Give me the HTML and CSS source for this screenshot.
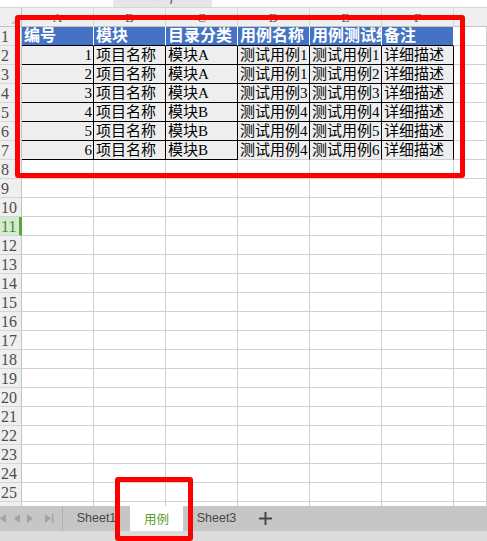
FILE: index.html
```html
<!DOCTYPE html>
<html lang="zh">
<head>
<meta charset="utf-8">
<title>用例</title>
<link rel="stylesheet" href="styles.css">
</head>
<body>
<div class="app">
  <div class="formula">
    <div class="namebox"><span class="cut">A11</span></div>
    <div class="fxbox"><span class="cut fx">✓ <i>fx</i></span></div>
    <div class="fbar"></div>
  </div>
  <div class="sheet">
    <div class="row colhead">
      <span class="corner"><span class="tri"></span></span>
      <span class="ch">A</span><span class="ch">B</span><span class="ch">C</span><span class="ch">D</span><span class="ch">E</span><span class="ch">F</span><span class="ch last"></span>
    </div>
    <div class="row">
      <span class="rh">1</span>
      <span class="c hd">编号</span><span class="c hd">模块</span><span class="c hd">目录分类</span><span class="c hd">用例名称</span><span class="c hd">用例测试结果</span><span class="c hd">备注</span><span class="c"></span>
    </div>
    <div class="row">
      <span class="rh">2</span>
      <span class="c d num">1</span><span class="c d">项目名称</span><span class="c d">模块A</span><span class="c d">测试用例1</span><span class="c d">测试用例1</span><span class="c d">详细描述</span><span class="c"></span>
    </div>
    <div class="row">
      <span class="rh">3</span>
      <span class="c d num">2</span><span class="c d">项目名称</span><span class="c d">模块A</span><span class="c d">测试用例1</span><span class="c d">测试用例2</span><span class="c d">详细描述</span><span class="c"></span>
    </div>
    <div class="row">
      <span class="rh">4</span>
      <span class="c d num">3</span><span class="c d">项目名称</span><span class="c d">模块A</span><span class="c d">测试用例3</span><span class="c d">测试用例3</span><span class="c d">详细描述</span><span class="c"></span>
    </div>
    <div class="row">
      <span class="rh">5</span>
      <span class="c d num">4</span><span class="c d">项目名称</span><span class="c d">模块B</span><span class="c d">测试用例4</span><span class="c d">测试用例4</span><span class="c d">详细描述</span><span class="c"></span>
    </div>
    <div class="row">
      <span class="rh">6</span>
      <span class="c d num">5</span><span class="c d">项目名称</span><span class="c d">模块B</span><span class="c d">测试用例4</span><span class="c d">测试用例5</span><span class="c d">详细描述</span><span class="c"></span>
    </div>
    <div class="row">
      <span class="rh">7</span>
      <span class="c d num">6</span><span class="c d">项目名称</span><span class="c d">模块B</span><span class="c d soft">测试用例4</span><span class="c d soft">测试用例6</span><span class="c d soft">详细描述</span><span class="c"></span>
    </div>
    <div class="row"><span class="rh">8</span><span class="c"></span><span class="c"></span><span class="c"></span><span class="c"></span><span class="c"></span><span class="c"></span><span class="c"></span></div>
    <div class="row"><span class="rh">9</span><span class="c"></span><span class="c"></span><span class="c"></span><span class="c"></span><span class="c"></span><span class="c"></span><span class="c"></span></div>
    <div class="row"><span class="rh">10</span><span class="c"></span><span class="c"></span><span class="c"></span><span class="c"></span><span class="c"></span><span class="c"></span><span class="c"></span></div>
    <div class="row"><span class="rh sel">11</span><span class="c"></span><span class="c"></span><span class="c"></span><span class="c"></span><span class="c"></span><span class="c"></span><span class="c"></span></div>
    <div class="row"><span class="rh">12</span><span class="c"></span><span class="c"></span><span class="c"></span><span class="c"></span><span class="c"></span><span class="c"></span><span class="c"></span></div>
    <div class="row"><span class="rh">13</span><span class="c"></span><span class="c"></span><span class="c"></span><span class="c"></span><span class="c"></span><span class="c"></span><span class="c"></span></div>
    <div class="row"><span class="rh">14</span><span class="c"></span><span class="c"></span><span class="c"></span><span class="c"></span><span class="c"></span><span class="c"></span><span class="c"></span></div>
    <div class="row"><span class="rh">15</span><span class="c"></span><span class="c"></span><span class="c"></span><span class="c"></span><span class="c"></span><span class="c"></span><span class="c"></span></div>
    <div class="row"><span class="rh">16</span><span class="c"></span><span class="c"></span><span class="c"></span><span class="c"></span><span class="c"></span><span class="c"></span><span class="c"></span></div>
    <div class="row"><span class="rh">17</span><span class="c"></span><span class="c"></span><span class="c"></span><span class="c"></span><span class="c"></span><span class="c"></span><span class="c"></span></div>
    <div class="row"><span class="rh">18</span><span class="c"></span><span class="c"></span><span class="c"></span><span class="c"></span><span class="c"></span><span class="c"></span><span class="c"></span></div>
    <div class="row"><span class="rh">19</span><span class="c"></span><span class="c"></span><span class="c"></span><span class="c"></span><span class="c"></span><span class="c"></span><span class="c"></span></div>
    <div class="row"><span class="rh">20</span><span class="c"></span><span class="c"></span><span class="c"></span><span class="c"></span><span class="c"></span><span class="c"></span><span class="c"></span></div>
    <div class="row"><span class="rh">21</span><span class="c"></span><span class="c"></span><span class="c"></span><span class="c"></span><span class="c"></span><span class="c"></span><span class="c"></span></div>
    <div class="row"><span class="rh">22</span><span class="c"></span><span class="c"></span><span class="c"></span><span class="c"></span><span class="c"></span><span class="c"></span><span class="c"></span></div>
    <div class="row"><span class="rh">23</span><span class="c"></span><span class="c"></span><span class="c"></span><span class="c"></span><span class="c"></span><span class="c"></span><span class="c"></span></div>
    <div class="row"><span class="rh">24</span><span class="c"></span><span class="c"></span><span class="c"></span><span class="c"></span><span class="c"></span><span class="c"></span><span class="c"></span></div>
    <div class="row"><span class="rh">25</span><span class="c"></span><span class="c"></span><span class="c"></span><span class="c"></span><span class="c"></span><span class="c"></span><span class="c"></span></div>
    <div class="row"><span class="rh">26</span><span class="c"></span><span class="c"></span><span class="c"></span><span class="c"></span><span class="c"></span><span class="c"></span><span class="c"></span></div>
  </div>
  <div class="tabbar">
    <div class="nav">
      <svg width="62" height="25" viewBox="0 0 62 25">
        <polygon points="6,8 0,12.5 6,17" fill="#a3a3a3"/>
        <polygon points="20,8 14,12.5 20,17" fill="#a3a3a3"/>
        <polygon points="27,8 33,12.5 27,17" fill="#a3a3a3"/>
        <polygon points="45,8 51,12.5 45,17" fill="#a3a3a3"/>
        <rect x="52" y="8" width="1.5" height="9" fill="#a3a3a3"/>
      </svg>
    </div>
    <div class="tab">Sheet1</div>
    <div class="tab active">用例</div>
    <div class="tab">Sheet3</div>
    <div class="add">
      <svg width="13" height="13" viewBox="0 0 13 13">
        <rect x="0" y="5.5" width="13" height="2" fill="#474747"/>
        <rect x="5.5" y="0" width="2" height="13" fill="#474747"/>
      </svg>
    </div>
  </div>
  <div class="status"></div>
  <div class="mark mark-table"></div>
  <div class="mark mark-tab"></div>
</div>
</body>
</html>
```

FILE: styles.css
```css
html, body {
  margin: 0;
  padding: 0;
  background: #ffffff;
}
.app {
  position: relative;
  width: 487px;
  height: 541px;
  overflow: hidden;
  font-family: "Liberation Serif", "Noto Sans CJK SC", serif;
}
.formula {
  display: flex;
  height: 7px;
  border-bottom: 1px solid #d6d6d6;
  overflow: hidden;
  background: #ffffff;
}
.namebox {
  width: 113px;
  background: #ffffff;
}
.fxbox {
  width: 99px;
  background: #e6e6e6;
}
.fbar {
  flex: 1;
  background: #ffffff;
}
.cut {
  display: block;
  font-size: 16px;
  line-height: 16px;
  color: #444;
  margin-top: -13px;
  padding-left: 30px;
}
.fx {
  padding-left: 42px;
  color: #666;
}
.sheet {
  height: 498px;
  overflow: hidden;
}
.row {
  display: grid;
  grid-template-columns: 22px repeat(6, 72px) 1fr;
  height: 19px;
}
.row > span {
  box-sizing: border-box;
  height: 19px;
  overflow: hidden;
  white-space: nowrap;
}
.colhead {
  background: #efefef;
}
.colhead > span {
  border-bottom: 1px solid #c4c4c4;
}
.corner {
  display: flex;
  justify-content: flex-end;
  align-items: flex-end;
  border-right: 1px solid #c4c4c4;
  padding: 0 2px 2px 0;
}
.tri {
  width: 0;
  height: 0;
  border-left: 8px solid transparent;
  border-bottom: 8px solid #c2c2c2;
}
.ch {
  text-align: center;
  font-family: "Liberation Serif", serif;
  font-size: 13px;
  line-height: 20px;
  color: #555;
  border-right: 1px solid #d8d8d8;
}
.ch.last {
  border-right: none;
}
.rh {
  background: #efefef;
  border-right: 1px solid #c4c4c4;
  border-bottom: 1px solid #d6d6d6;
  font-family: "Liberation Serif", serif;
  font-size: 16px;
  line-height: 19px;
  color: #4d4d4d;
  padding-left: 1px;
}
.rh.sel {
  background: #d5ead3;
  color: #3f8f1f;
  border-right: 3px solid #5aa63a;
}
.c {
  border-right: 1px solid #d0d0d0;
  border-bottom: 1px solid #d0d0d0;
  font-size: 15px;
  line-height: 18px;
  padding-left: 2px;
  color: #000;
}
.hd {
  background: #4472c4;
  color: #ffffff;
  font-weight: bold;
  font-size: 16px;
  border-right: 1px solid #ffffff;
  border-bottom: 1px solid #000000;
}
.d {
  background: #eeeeee;
  border-right: 1px solid #000000;
  border-bottom: 1px solid #000000;
}
.d.soft {
  border-bottom: 1px solid #d0d0d0;
}
.num {
  text-align: right;
  padding-left: 0;
  padding-right: 1px;
}
.tabbar {
  display: flex;
  height: 25px;
  background: #c6c6c6;
  font-family: "Liberation Sans", "Noto Sans CJK SC", sans-serif;
  font-size: 12.5px;
  color: #474747;
}
.nav {
  width: 62px;
  height: 25px;
  border-right: 1px solid #b2b2b2;
}
.nav svg {
  display: block;
}
.tab {
  width: 67px;
  line-height: 25px;
  text-align: center;
}
.tab.active {
  width: 53px;
  background: #ffffff;
  color: #5e9c30;
  font-family: "Noto Sans CJK SC", sans-serif;
  font-size: 12.5px;
}
.tab:last-of-type {
  border-right: 1px solid #b2b2b2;
}
.add {
  display: flex;
  align-items: center;
  padding-left: 9px;
}
.add svg {
  display: block;
}
.status {
  height: 10px;
  background: #dcdcdc;
}
.mark {
  position: absolute;
  box-sizing: border-box;
  border: 5px solid #ff0000;
  border-radius: 3px;
}
.mark-table {
  left: 15px;
  top: 15px;
  width: 450px;
  height: 163px;
}
.mark-tab {
  left: 115px;
  top: 477px;
  width: 78px;
  height: 64px;
}
```
